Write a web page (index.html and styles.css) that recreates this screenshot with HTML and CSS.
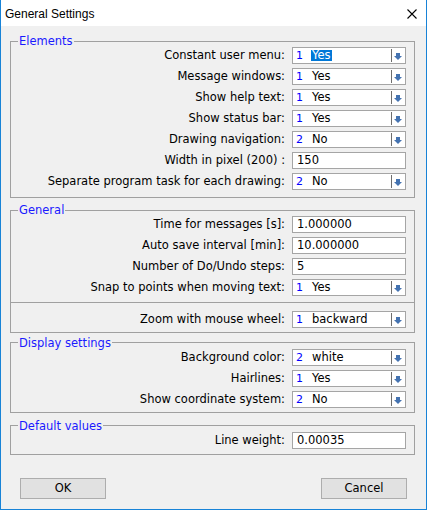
FILE: index.html
```html
<!DOCTYPE html>
<html>
<head>
<meta charset="utf-8">
<link rel="stylesheet" href="styles.css">
</head>
<body>
<div class="window">
  <div class="titlebar">
    <span class="title">General Settings</span>
    <svg class="close" width="10" height="10" viewBox="0 0 10 10"><path d="M0.5 0.5L9.5 9.5M9.5 0.5L0.5 9.5" stroke="#000" stroke-width="1.1" fill="none"/></svg>
  </div>

  <div class="group g1">
    <div class="caption">Elements</div>
    <div class="row"><span class="label">Constant user menu:</span><div class="combo"><span class="num">1</span><span class="val"><span class="sel">Yes</span></span><span class="sep"></span><span class="btn"><svg width="8" height="7" viewBox="0 0 8 7"><path d="M2 0H6V3H8L4 7L0 3H2Z" fill="#4473b1"/></svg></span></div></div>
    <div class="row"><span class="label">Message windows:</span><div class="combo"><span class="num">1</span><span class="val">Yes</span><span class="sep"></span><span class="btn"><svg width="8" height="7" viewBox="0 0 8 7"><path d="M2 0H6V3H8L4 7L0 3H2Z" fill="#4473b1"/></svg></span></div></div>
    <div class="row"><span class="label">Show help text:</span><div class="combo"><span class="num">1</span><span class="val">Yes</span><span class="sep"></span><span class="btn"><svg width="8" height="7" viewBox="0 0 8 7"><path d="M2 0H6V3H8L4 7L0 3H2Z" fill="#4473b1"/></svg></span></div></div>
    <div class="row"><span class="label">Show status bar:</span><div class="combo"><span class="num">1</span><span class="val">Yes</span><span class="sep"></span><span class="btn"><svg width="8" height="7" viewBox="0 0 8 7"><path d="M2 0H6V3H8L4 7L0 3H2Z" fill="#4473b1"/></svg></span></div></div>
    <div class="row"><span class="label">Drawing navigation:</span><div class="combo"><span class="num">2</span><span class="val">No</span><span class="sep"></span><span class="btn"><svg width="8" height="7" viewBox="0 0 8 7"><path d="M2 0H6V3H8L4 7L0 3H2Z" fill="#4473b1"/></svg></span></div></div>
    <div class="row"><span class="label">Width in pixel (200) :</span><div class="input">150</div></div>
    <div class="row"><span class="label">Separate program task for each drawing:</span><div class="combo"><span class="num">2</span><span class="val">No</span><span class="sep"></span><span class="btn"><svg width="8" height="7" viewBox="0 0 8 7"><path d="M2 0H6V3H8L4 7L0 3H2Z" fill="#4473b1"/></svg></span></div></div>
  </div>

  <div class="group g2">
    <div class="caption">General</div>
    <div class="row"><span class="label">Time for messages [s]:</span><div class="input">1.000000</div></div>
    <div class="row"><span class="label">Auto save interval [min]:</span><div class="input">10.000000</div></div>
    <div class="row"><span class="label">Number of Do/Undo steps:</span><div class="input">5</div></div>
    <div class="row"><span class="label">Snap to points when moving text:</span><div class="combo"><span class="num">1</span><span class="val">Yes</span><span class="sep"></span><span class="btn"><svg width="8" height="7" viewBox="0 0 8 7"><path d="M2 0H6V3H8L4 7L0 3H2Z" fill="#4473b1"/></svg></span></div></div>
    <div class="divider">
      <div class="row"><span class="label">Zoom with mouse wheel:</span><div class="combo"><span class="num">1</span><span class="val">backward</span><span class="sep"></span><span class="btn"><svg width="8" height="7" viewBox="0 0 8 7"><path d="M2 0H6V3H8L4 7L0 3H2Z" fill="#4473b1"/></svg></span></div></div>
    </div>
  </div>

  <div class="group g3">
    <div class="caption">Display settings</div>
    <div class="row"><span class="label">Background color:</span><div class="combo"><span class="num">2</span><span class="val">white</span><span class="sep"></span><span class="btn"><svg width="8" height="7" viewBox="0 0 8 7"><path d="M2 0H6V3H8L4 7L0 3H2Z" fill="#4473b1"/></svg></span></div></div>
    <div class="row"><span class="label">Hairlines:</span><div class="combo"><span class="num">1</span><span class="val">Yes</span><span class="sep"></span><span class="btn"><svg width="8" height="7" viewBox="0 0 8 7"><path d="M2 0H6V3H8L4 7L0 3H2Z" fill="#4473b1"/></svg></span></div></div>
    <div class="row"><span class="label">Show coordinate system:</span><div class="combo"><span class="num">2</span><span class="val">No</span><span class="sep"></span><span class="btn"><svg width="8" height="7" viewBox="0 0 8 7"><path d="M2 0H6V3H8L4 7L0 3H2Z" fill="#4473b1"/></svg></span></div></div>
  </div>

  <div class="group g4">
    <div class="caption">Default values</div>
    <div class="row"><span class="label">Line weight:</span><div class="input">0.00035</div></div>
  </div>

  <div class="buttons">
    <div class="button">OK</div>
    <div class="button">Cancel</div>
  </div>
</div>
</body>
</html>
```

FILE: styles.css
```css
* { box-sizing: border-box; }
html, body { margin: 0; padding: 0; background: #f0f0f0; }
body {
  font-family: "DejaVu Sans", Verdana, sans-serif;
  font-size: 11.5px;
  color: #000;
}
.window {
  width: 427px;
  height: 510px;
  border: 1px solid #1883d7;
  border-top: none;
  background: #f0f0f0;
  display: flex;
  flex-direction: column;
}
.titlebar {
  height: 26px;
  flex: none;
  background: #fff;
  display: flex;
  align-items: flex-start;
  justify-content: space-between;
}
.title {
  font-family: "Liberation Sans", Arial, sans-serif;
  font-size: 12px;
  line-height: 14px;
  margin-top: 7px;
  margin-left: 4px;
}
.close {
  margin-top: 9px;
  margin-right: 9px;
  display: block;
}
.group {
  border: 1px solid #a0a0a0;
  margin-left: 9px;
  margin-right: 11px;
  display: flex;
  flex-direction: column;
}
.caption {
  align-self: flex-start;
  color: #1a1aff;
  background: #f0f0f0;
  line-height: 14px;
  padding: 0 1px;
  margin: -8px 0 -3px 7px;
}
.g1 { margin-top: 15px; padding-bottom: 5px; }
.g2 { margin-top: 12px; padding-bottom: 2px; }
.g3 { margin-top: 9px; padding-top: 1px; padding-bottom: 2px; }
.g4 { margin-top: 12px; padding-top: 1px; padding-bottom: 3px; }
.divider {
  border-top: 1px solid #a0a0a0;
  margin-top: 4px;
  padding-top: 6px;
}
.row {
  height: 21px;
  display: flex;
  justify-content: flex-end;
  align-items: flex-start;
  padding-right: 8px;
}
.label {
  margin-top: 4px;
  line-height: 13px;
  margin-right: 7px;
  white-space: nowrap;
}
.combo, .input {
  margin-top: 2px;
  width: 114px;
  height: 17px;
  background: #fff;
  border: 1px solid #a5a5a5;
  display: flex;
  align-items: center;
}
.input {
  padding-left: 4px;
  line-height: 13px;
}
.num {
  width: 19px;
  padding-left: 3px;
  color: #0000ff;
  font-size: 11px;
  flex: none;
}
.val {
  flex: 1;
  line-height: 13px;
}
.sel {
  display: inline-block;
  background: #0078d7;
  color: #fff;
  line-height: 11px;
  padding: 0 1px;
  margin-left: -1px;
}
.sep {
  width: 1px;
  height: 13px;
  background: #6e6e6e;
  flex: none;
}
.btn {
  width: 13px;
  flex: none;
  display: flex;
  justify-content: center;
  padding-right: 1px;
}
.btn svg { display: block; margin-top: 1px; }
.buttons {
  margin-top: 23px;
  display: flex;
  justify-content: space-between;
  padding: 0 19px 0 19px;
}
.button {
  width: 86px;
  height: 21px;
  background: #e1e1e1;
  border: 1px solid #adadad;
  display: flex;
  align-items: center;
  justify-content: center;
  line-height: 13px;
}
```
